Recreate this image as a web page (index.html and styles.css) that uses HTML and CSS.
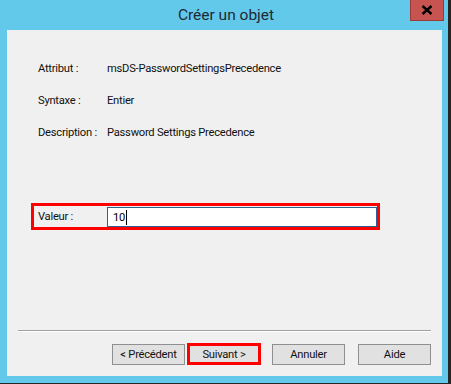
FILE: index.html
```html
<!DOCTYPE html>
<html lang="fr">
<head>
<meta charset="utf-8">
<title>Créer un objet</title>
<link rel="stylesheet" href="styles.css">
</head>
<body>
<div class="window">
  <div class="titlebar">
    <span class="spacer"></span>
    <span class="title">Créer un objet</span>
    <button class="close" aria-label="Fermer">
      <svg width="12" height="10" viewBox="0 0 12 10"><path d="M1.5 1 L10.5 9 M10.5 1 L1.5 9" stroke="#000" stroke-width="2.4" fill="none"/></svg>
    </button>
  </div>
  <div class="client">
    <div class="info">
      <div class="row"><span class="lbl">Attribut :</span><span>msDS-PasswordSettingsPrecedence</span></div>
      <div class="row"><span class="lbl">Syntaxe :</span><span>Entier</span></div>
      <div class="row"><span class="lbl">Description :</span><span>Password Settings Precedence</span></div>
    </div>
    <div class="value-box">
      <span class="vlbl">Valeur :</span>
      <div class="input"><span>10</span><span class="caret"></span></div>
    </div>
    <div class="sep"></div>
    <div class="buttons">
      <button class="btn">&lt; Précédent</button>
      <button class="btn hl">Suivant &gt;</button>
      <button class="btn gap">Annuler</button>
      <button class="btn gap2">Aide</button>
    </div>
  </div>
</div>
</body>
</html>
```

FILE: styles.css
```css
html, body {
  margin: 0;
  padding: 0;
  background: #262626;
}
body {
  width: 451px;
  height: 384px;
  overflow: hidden;
  font-family: Roboto, "Noto Sans", sans-serif;
  font-size: 11.2px;
  letter-spacing: -0.25px;
  color: #111;
}
.window {
  width: 448px;
  height: 383px;
  background: #63c9ea;
  display: flex;
  flex-direction: column;
}
.titlebar {
  height: 30px;
  display: grid;
  grid-template-columns: 1fr auto 1fr;
}
.title {
  font-size: 15.5px;
  letter-spacing: 0;
  line-height: 30px;
  color: #1e2a32;
  padding-left: 4px;
}
.close {
  justify-self: end;
  align-self: start;
  margin: 0 4px 0 0;
  width: 34px;
  height: 21px;
  padding: 0;
  border: 1px solid #9b3a35;
  border-top: none;
  background: #c75450;
  display: flex;
  align-items: center;
  justify-content: center;
}
.client {
  margin-left: 7px;
  width: 435px;
  height: 346px;
  background: #f0f0f0;
  display: flex;
  flex-direction: column;
}
.info {
  padding: 31px 0 0 31px;
  display: flex;
  flex-direction: column;
  gap: 16px;
}
.row {
  display: flex;
  line-height: 16px;
  height: 16px;
  white-space: nowrap;
}
.lbl {
  width: 69px;
}
.value-box {
  margin: 62px 0 0 24px;
  width: 343px;
  height: 21px;
  border: 3px solid #ff0000;
  display: flex;
  align-items: center;
}
.vlbl {
  width: 69px;
  padding-left: 4px;
}
.input {
  box-sizing: border-box;
  width: 270px;
  height: 20px;
  margin-top: 1px;
  background: #fff;
  border: 1px solid #2f6190;
  display: flex;
  align-items: center;
  padding-left: 5px;
  color: #000;
}
.caret {
  width: 1px;
  height: 15px;
  background: #000;
  margin-left: 1px;
}
.sep {
  margin: 100px 0 0 11px;
  width: 413px;
  height: 1px;
  background: #a0a0a0;
  border-bottom: 1px solid #fff;
}
.buttons {
  display: flex;
  padding: 11px 0 0 105px;
  align-items: flex-start;
}
.btn {
  box-sizing: border-box;
  width: 73px;
  height: 21px;
  margin-top: 1px;
  padding: 0;
  border: 1px solid #8f8f8f;
  background: #e1e1e1;
  font-family: Roboto, "Noto Sans", sans-serif;
  font-size: 11.2px;
  letter-spacing: -0.25px;
  color: #111;
}
.btn.hl {
  width: 74px;
  height: 22px;
  margin-top: 0;
  margin-left: 2px;
  border: 3px solid #ff0000;
}
.btn.gap {
  margin-left: 11px;
}
.btn.gap2 {
  margin-left: 13px;
}
```
